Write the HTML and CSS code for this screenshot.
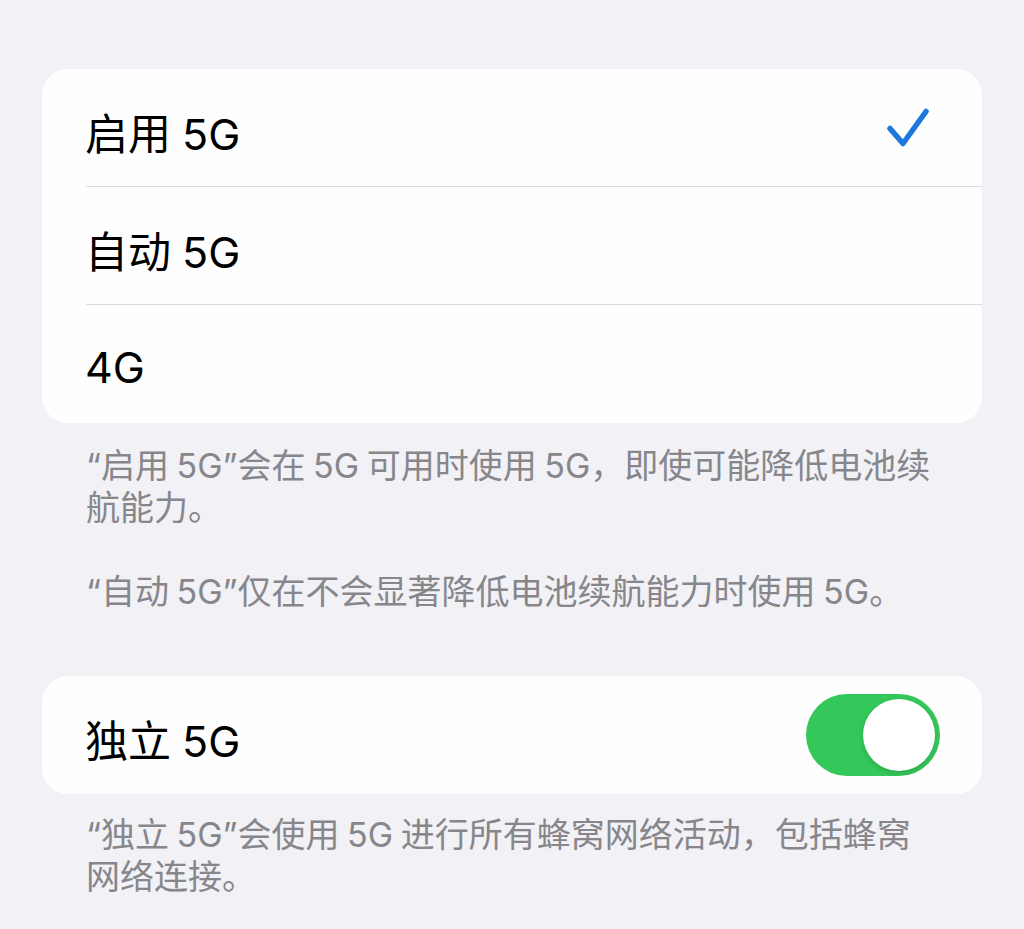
FILE: index.html
```html
<!DOCTYPE html>
<html lang="zh-CN">
<head>
<meta charset="utf-8">
<title>语音与数据</title>
<link rel="stylesheet" href="styles.css">
</head>
<body>
<main class="page">
  <section class="group">
    <ul class="card">
      <li class="row">
        <div class="row-inner">
          <span class="label">启用 5G</span>
          <svg class="check" width="44" height="44" viewBox="0 0 44 44" aria-hidden="true">
            <path d="M4 22.5 L17 37.5 L40 5.5" fill="none" stroke="#1d77dd" stroke-width="5.5" stroke-linecap="round" stroke-linejoin="round"/>
          </svg>
        </div>
      </li>
      <li class="row">
        <div class="row-inner"><span class="label">自动 5G</span></div>
      </li>
      <li class="row">
        <div class="row-inner"><span class="label">4G</span></div>
      </li>
    </ul>
    <div class="footer">
      <p>“启用 5G”会在 5G 可用时使用 5G，即使可能降低电池续航能力。</p>
      <p>“自动 5G”仅在不会显著降低电池续航能力时使用 5G。</p>
    </div>
  </section>

  <section class="group group-sa">
    <ul class="card">
      <li class="row">
        <div class="row-inner">
          <span class="label">独立 5G</span>
          <span class="switch on" role="switch" aria-checked="true"><span class="knob"></span></span>
        </div>
      </li>
    </ul>
    <div class="footer">
      <p>“独立 5G”会使用 5G 进行所有蜂窝网络活动，包括蜂窝网络连接。</p>
    </div>
  </section>
</main>
</body>
</html>
```

FILE: styles.css
```css
html, body {
  margin: 0;
  padding: 0;
  background: #f1f1f6;
}

body {
  font-family: Inter, "Noto Sans CJK SC", sans-serif;
  color: #000;
  -webkit-font-smoothing: antialiased;
}

.page {
  padding: 69px 42px 0;
}

.card {
  list-style: none;
  margin: 0;
  padding: 0;
  background: #fefefe;
  border-radius: 26px;
  overflow: hidden;
}

.row {
  padding-left: 44px;
}

.row-inner {
  height: 118px;
  display: flex;
  align-items: center;
  justify-content: space-between;
  padding-right: 44px;
  padding-top: 6px;
  box-sizing: border-box;
  border-bottom: 1px solid #dcdce0;
}

.row:last-child .row-inner {
  border-bottom: none;
}

.label {
  font-size: 43px;
  margin-left: -1px;
  word-spacing: -1px;
}

.check {
  display: block;
  margin-right: 8px;
  margin-top: -6px;
  overflow: visible;
}

.footer {
  padding: 22px 44px 0;
  color: #86868b;
  font-size: 34px;
  line-height: 42px;
  word-spacing: -2px;
}

.footer p {
  margin: 0;
}

.footer p + p {
  margin-top: 42px;
}

.group-sa {
  margin-top: 63px;
}

.group-sa .footer {
  padding-top: 20px;
}

.group-sa .row-inner {
  padding-right: 42px;
}

.switch {
  width: 134px;
  height: 82px;
  border-radius: 41px;
  background: #34c759;
  position: relative;
  flex: none;
  margin-top: -6px;
}

.knob {
  position: absolute;
  top: 5px;
  right: 5px;
  width: 72px;
  height: 72px;
  border-radius: 50%;
  background: #fff;
  box-shadow: 0 2px 5px rgba(0, 0, 0, 0.15);
}
```
